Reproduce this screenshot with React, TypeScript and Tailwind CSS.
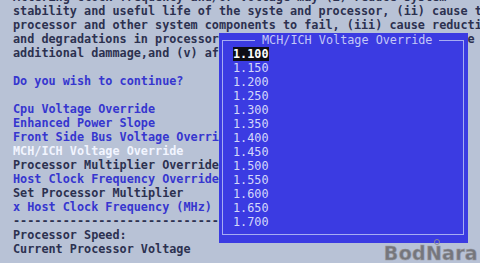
const DARK = "text-[#2c3150]";
const BLUE = "text-[#3636cf]";

const lines: { t: string; c: string }[] = [
  { t: "Altering clock frequency and/or voltage may (i) reduce system", c: DARK },
  { t: "stability and useful life of the syste and processor, (ii) cause t", c: DARK },
  { t: "processor and other system components to fail, (iii) cause reducti", c: DARK },
  { t: "and degradations in processor performance, (iv) cause".padEnd(64) + "e", c: DARK },
  { t: "additional dammage,and (v) affect system data integrity.", c: DARK },
  { t: "\u00a0", c: DARK },
  { t: "Do you wish to continue?", c: BLUE },
  { t: "\u00a0", c: DARK },
  { t: "Cpu Voltage Override", c: BLUE },
  { t: "Enhanced Power Slope", c: BLUE },
  { t: "Front Side Bus Voltage Override", c: BLUE },
  { t: "MCH/ICH Voltage Override", c: "text-[#f2f5ff]" },
  { t: "Processor Multiplier Override", c: DARK },
  { t: "Host Clock Frequency Override", c: BLUE },
  { t: "Set Processor Multiplier", c: DARK },
  { t: "x Host Clock Frequency (MHz)", c: BLUE },
  { t: "-----------------------------", c: DARK },
  { t: "Processor Speed:", c: DARK },
  { t: "Current Processor Voltage", c: DARK },
];

const values = [
  "1.100", "1.150", "1.200", "1.250", "1.300", "1.350", "1.400",
  "1.450", "1.500", "1.550", "1.600", "1.650", "1.700",
];

export default function App() {
  return (
    <div
      className="relative w-[480px] h-[263px] overflow-hidden bg-[#b8c2d6] font-bold text-[11.8px] leading-[14px]"
      style={{ fontFamily: '"DejaVu Sans Mono", "Liberation Mono", monospace' }}
    >
      {/* background BIOS text */}
      <div className="mt-[-10px] pl-[13px] whitespace-pre">
        {lines.map((l, i) => (
          <div key={i} className={l.c}>
            {l.t}
          </div>
        ))}
      </div>

      {/* popup menu */}
      <div className="absolute left-[219px] top-[33px] w-[249px] h-[210px] bg-[#3b3be2] flex flex-col pl-[3px] pr-[4px] pb-[8px]">
        <div className="flex h-[14px]">
          <div className="w-[33px] mt-[7px] border-t border-l border-[#a6acf2]" />
          <div className="px-[7px] font-normal text-[#c4c8f6] whitespace-pre">MCH/ICH Voltage Override</div>
          <div className="flex-1 mt-[7px] border-t border-r border-[#a6acf2]" />
        </div>
        <div className="flex-1 border-l border-r border-b border-[#a6acf2] pl-[10px] flex flex-col items-start">
          {values.map((v, i) => (
            <div
              key={v}
              className={
                i === 0
                  ? "bg-[#0e0e16] text-white h-[14px]"
                  : "text-[#d4d8fa] font-normal h-[14px]"
              }
            >
              {v}
            </div>
          ))}
        </div>
      </div>

      {/* watermark */}
      <span className="absolute left-[434px] top-[239px] w-[6px] h-[6px] rounded-full border border-[#8a8b92]" />
      <div
        className="absolute right-[2px] bottom-[0px] text-[19px] leading-[19px] font-bold text-[#75767c] tracking-[0.3px]"
        style={{ fontFamily: '"DejaVu Sans", sans-serif', WebkitTextStroke: "0.5px #9a9ba2" }}
      >
        BodNara
      </div>
    </div>
  );
}
